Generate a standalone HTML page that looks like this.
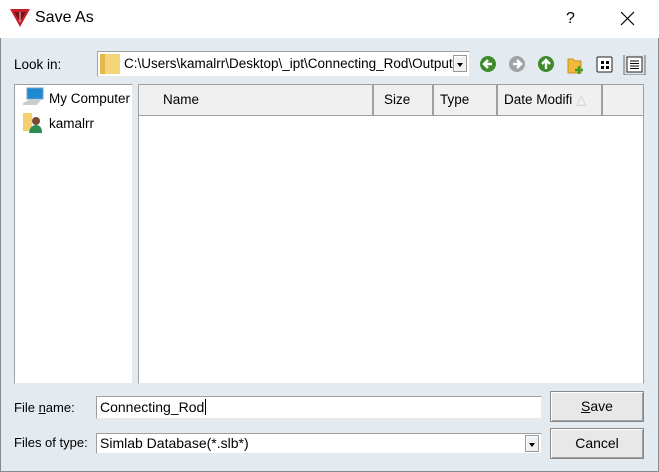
<!DOCTYPE html>
<html><head><style>
*{box-sizing:border-box;margin:0;padding:0}
body{width:659px;height:472px;position:relative;overflow:hidden;background:#fff;font-family:"Liberation Sans",Arial,sans-serif;font-size:13px;color:#000}
.a{position:absolute}
.body{left:0;top:38px;width:659px;height:434px;background:#e4ebf0;border:1px solid #8a8a8a;border-top:none}
.sunk{border:1px solid #a0a0a0;border-right-color:#e8e8e8;border-bottom-color:#e8e8e8;background:#fff}
.hd{top:0;height:31px;background:#f0f0f0;border-right:2px solid #a0a0a0;border-bottom:1px solid #a0a0a0;padding-left:10px;line-height:30px;font-size:13.5px}
.btn{background:#e8e8e8;border:1px solid #888;box-shadow:inset 1px 1px #fff, inset -1px -1px #a0a0a0;text-align:center;font-size:14px}
.dd{width:14px;height:17px;background:#f0f0f0;border:1px solid #999;box-shadow:inset 1px 1px #fff}
.dd:after{content:"";position:absolute;left:3px;top:7px;border-left:3px solid transparent;border-right:3px solid transparent;border-top:4px solid #000}
</style></head><body>
<svg class="a" style="left:9px;top:8px" width="22" height="20" viewBox="0 0 22 20"><path d="M1 1 L21 1 L11 19 Z" fill="#c8202a"/><path d="M5 4 L17 4 L11 14 Z" fill="#7a1015"/><path d="M11 4 L11 14" stroke="#ddd" stroke-width="1"/></svg>
<div class="a" style="left:35px;top:9px;font-size:16px">Save As</div>
<div class="a" style="left:566px;top:10px;font-size:16px">?</div>
<svg class="a" style="left:620px;top:11px" width="15" height="15"><path d="M1 1L14 14M14 1L1 14" stroke="#000" stroke-width="1.2"/></svg>
<div class="a body"></div>
<div class="a" style="left:14px;top:57px;font-size:13.5px">Look in:</div>
<div class="a sunk" style="left:97px;top:51px;width:373px;height:26px"></div>
<div class="a" style="left:100px;top:54px;width:20px;height:20px;background:#f6d479;border-left:5px solid #e3b94c"></div>
<div class="a" style="left:124px;top:56px;font-size:13.5px">C:\Users\kamalrr\Desktop\_ipt\Connecting_Rod\Output</div>
<div class="a dd" style="left:453px;top:55px"></div>
<svg class="a" style="left:479px;top:55px" width="170" height="20">
<circle cx="9" cy="9" r="8" fill="#3e8b2b"/><path d="M13 9H6M9 5L5 9L9 13" stroke="#fff" stroke-width="2.4" fill="none"/>
<circle cx="38" cy="9" r="8" fill="#a0a4a8"/><path d="M34 9H41M38 5L42 9L38 13" stroke="#fff" stroke-width="2.4" fill="none"/>
<circle cx="67" cy="9" r="8" fill="#3e8b2b"/><path d="M67 14V6M63 9L67 5L71 9" stroke="#fff" stroke-width="2.4" fill="none"/>
<path d="M89 4H94L96 6H102V18H89Z" fill="#f0b93a" stroke="#c99020"/><path d="M100 11V19M96 15H104" stroke="#3e9b2b" stroke-width="2.4"/>
<rect x="118" y="2" width="15" height="15" fill="#fff" stroke="#222" rx="1"/><rect x="122" y="6" width="3" height="3" fill="#000"/><rect x="127" y="6" width="3" height="3" fill="#000"/><rect x="122" y="11" width="3" height="3" fill="#000"/><rect x="127" y="11" width="3" height="3" fill="#000"/>
<rect x="145" y="-1" width="21" height="21" fill="#dde5ec" stroke="#6a6a6a"/><rect x="148" y="2" width="15" height="15" fill="#fff" stroke="#222"/><path d="M151 6H160M151 8.5H160M151 11H160M151 13.5H160" stroke="#000"/>
</svg>
<div class="a sunk" style="left:14px;top:84px;width:119px;height:300px"></div>
<svg class="a" style="left:21px;top:86px" width="24" height="22"><rect x="6" y="2" width="16" height="11" fill="#1e8ad6" stroke="#7a9cb8"/><path d="M2 17L8 14H20L16 19H2Z" fill="#ccc"/></svg>
<div class="a" style="left:49px;top:91px;font-size:13.5px">My Computer</div>
<svg class="a" style="left:22px;top:112px" width="22" height="22"><rect x="1" y="1" width="9" height="18" fill="#f3cf6f"/><circle cx="14" cy="9" r="4" fill="#7a4a2a"/><path d="M7 21Q8 13 14 13Q20 13 20 21Z" fill="#2d8a52"/></svg>
<div class="a" style="left:49px;top:116px;font-size:13.5px">kamalrr</div>
<div class="a sunk" style="left:138px;top:84px;width:506px;height:300px;border-right-color:#a0a0a0">
<div class="a hd" style="left:0;width:235px;padding-left:24px">Name</div>
<div class="a hd" style="left:235px;width:60px">Size</div>
<div class="a hd" style="left:295px;width:64px;padding-left:6px">Type</div>
<div class="a hd" style="left:359px;width:105px;padding-left:6px">Date Modifi <span style="color:#ccc">△</span></div>
<div class="a" style="left:464px;top:0;width:40px;height:31px;background:#f0f0f0;border-bottom:1px solid #a0a0a0"></div>
</div>
<div class="a" style="left:14px;top:400px;font-size:13px">File <u>n</u>ame:</div>
<div class="a sunk" style="left:96px;top:396px;width:446px;height:23px;padding:2px 3px;font-size:14px">Connecting_Rod<span style="border-left:1px solid #000;margin-left:1px"></span></div>
<div class="a btn" style="left:550px;top:391px;width:94px;height:31px;line-height:29px"><u>S</u>ave</div>
<div class="a" style="left:14px;top:435px;font-size:13px">Files of type:</div>
<div class="a sunk" style="left:96px;top:433px;width:446px;height:21px;padding:1px 3px;font-size:14px">Simlab Database(*.slb*)</div>
<div class="a dd" style="left:525px;top:435px"></div>
<div class="a btn" style="left:550px;top:428px;width:94px;height:31px;line-height:29px">Cancel</div>
</body></html>
